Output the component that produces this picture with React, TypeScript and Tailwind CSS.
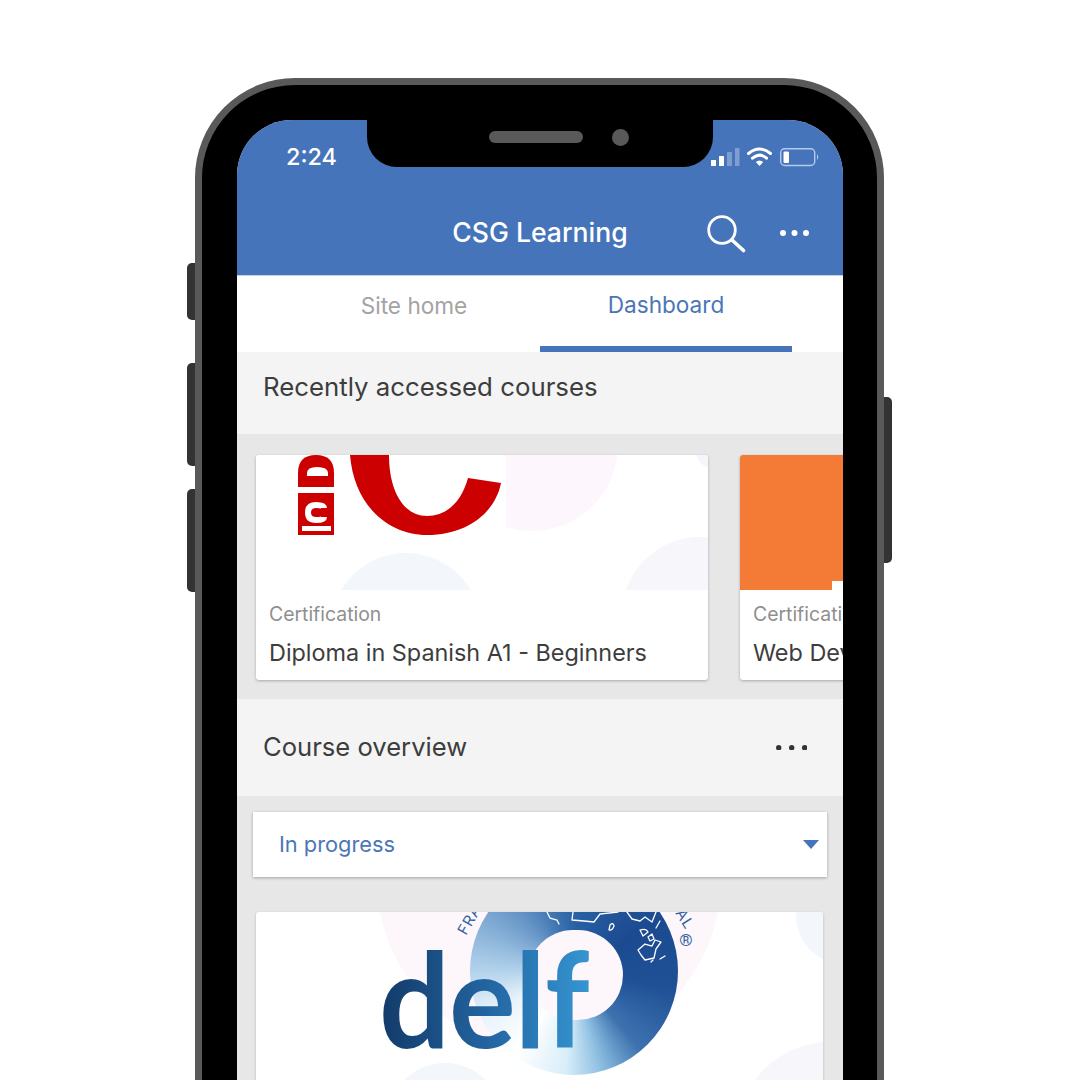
import React from "react";

const BLUE = "#4674bb";

function Dots({ color, r = 3, gap = 11.5 }: { color: string; r?: number; gap?: number }) {
  const w = gap * 2 + r * 2;
  return (
    <svg width={w} height={r * 2} viewBox={`0 0 ${w} ${r * 2}`} className="block">
      <circle cx={r} cy={r} r={r} fill={color} />
      <circle cx={r + gap} cy={r} r={r} fill={color} />
      <circle cx={r + gap * 2} cy={r} r={r} fill={color} />
    </svg>
  );
}

function StatusIcons() {
  return (
    <svg width="110" height="20" viewBox="710 147 110 20" className="block">
      <rect x="711" y="160" width="5" height="6" rx="0.5" fill="#fff" />
      <rect x="719" y="156" width="5" height="10" rx="0.5" fill="#fff" />
      <rect x="727" y="152" width="5" height="14" rx="0.5" fill="#fff" fillOpacity="0.3" />
      <rect x="735" y="148" width="4.5" height="18" rx="0.5" fill="#fff" fillOpacity="0.3" />
      <g fill="none" stroke="#fff" strokeWidth="3" strokeLinecap="round">
        <path d="M748.5 153.5 Q759.5 144.5 770.5 153.5" />
        <path d="M752.5 158.2 Q759.5 152 766.5 158.2" />
      </g>
      <path d="M755.8 162 Q759.5 158.8 763.2 162 L759.5 166 Z" fill="#fff" />
      <rect x="780.7" y="148.7" width="34" height="16.8" rx="4" fill="none" stroke="#b4cbea" strokeWidth="1.4" />
      <rect x="783.5" y="151.5" width="5.5" height="11.5" rx="1.2" fill="#fff" />
      <path d="M817 154 Q819.5 157 817 160 Z" fill="#b4cbea" />
    </svg>
  );
}

function SearchIcon() {
  return (
    <svg width="40" height="40" viewBox="706 214 40 40" className="block" fill="none" stroke="#fff">
      <circle cx="722" cy="231" r="13.3" strokeWidth="2.8" />
      <path d="M732 241 L743.5 251.5" strokeWidth="3.6" strokeLinecap="round" />
    </svg>
  );
}

function SpanishArt() {
  return (
    <svg width="452" height="135" viewBox="256 455 452 135" className="block">
      <rect x="256" y="455" width="452" height="135" fill="#fff" />
      <clipPath id="pinkclip">
        <rect x="506" y="455" width="120" height="90" />
      </clipPath>
      <circle cx="532" cy="445" r="86" fill="#fdf6fc" clipPath="url(#pinkclip)" />
      <circle cx="406" cy="628" r="75" fill="#f3f6fb" />
      <circle cx="700" cy="615" r="78" fill="#f6f6fb" />
      <circle cx="712" cy="452" r="16" fill="#f5f6fb" />
      <path
        d="M350 455 C354 505 388 535 427 535 C467 535 495 513 501 483 L468 478 C461 503 446 516 427 516 C403 516 389 490 389 455 Z"
        fill="#cc0000"
      />
      <path d="M298 487 L298 473 Q298 455 316 455 Q334 455 334 473 L334 487 Z" fill="#cc0000" />
      <path d="M307 476 L307 473 Q307 467 317 467 Q328 467 328 473 L328 476 Z" fill="#fff" />
      <rect x="298" y="493" width="36" height="42" fill="#cc0000" />
      <path d="M324 517 Q324 520 316 520 Q308 520 308 512.5 Q308 505 316 505 Q324 505 324 508" fill="none" stroke="#fff" strokeWidth="6" />
      <rect x="302" y="526" width="29" height="5" fill="#fff" />
    </svg>
  );
}

function CourseCard({ children, sub, title }: { children: React.ReactNode; sub: string; title: string }) {
  return (
    <div className="w-[452px] h-[225px] shrink-0 bg-white rounded-[3px] overflow-hidden shadow-[0_1px_3px_rgba(0,0,0,0.28)]">
      <div className="h-[135px]">{children}</div>
      <div className="pl-[13px] whitespace-nowrap">
        <div className="text-[19.4px] leading-[24px] mt-[12px] text-[#8f8f8f]">{sub}</div>
        <div className="text-[23.4px] leading-[30px] mt-[12px] text-[#3d3d3d]">{title}</div>
      </div>
    </div>
  );
}

function DelfCard() {
  return (
    <div className="relative ml-[3px] mt-[35px] w-[567px] h-[300px] bg-white rounded-t-[3px] overflow-hidden shadow-[0_1px_3px_rgba(0,0,0,0.2)]">
      <svg width="567" height="168" viewBox="256 912 567 168" className="block">
        <circle cx="549" cy="880" r="172" fill="#fdf6fb" />
        <circle cx="846" cy="915" r="50" fill="#f3f6fb" />
        <circle cx="445" cy="1120" r="57" fill="#f3f7fb" />
        <circle cx="830" cy="1135" r="93" fill="#f6f6fb" />
      </svg>
      <div className="absolute left-[214px] top-[-45px] w-[208px] h-[208px] rounded-full bg-[conic-gradient(#2a62a6_0deg,#1b4a90_60deg,#1f5096_100deg,#3d72af_140deg,#8fc0e2_165deg,#d9eef9_185deg,#ffffff_215deg,#e6f3fb_245deg,#a9cce8_275deg,#6f9ccb_310deg,#3f74b0_340deg,#2a62a6_360deg)]" />
      <div className="absolute left-[272px] top-[18px] w-[95px] h-[90px] rounded-full bg-[#fdf6fb]" />
      <svg width="567" height="168" viewBox="256 912 567 168" className="absolute left-0 top-0">
        <g fill="none" stroke="#fff" strokeWidth="1.3" strokeLinejoin="round" strokeLinecap="round">
          <path d="M547 912 L550 918 L557 920 L559 924" />
          <path d="M573 912 L572 920 L584 921 L594 922 L600 914 L618 912" />
          <path d="M610 925 Q613 922 614 926 Q612 931 609 930 Z" />
          <path d="M627 912 L632 919 L640 921 L645 917 L652 922 L656 912" />
          <path d="M660 921 L656 928" />
          <path d="M640 930 Q646 928 648 932 L643 936 Z" />
          <path d="M648 937 L652 934 L654 939 L650 941 Z" />
          <path d="M638 950 L645 944 L652 946 L655 940 L661 942 L656 949 L654 958 L645 960 L641 955 Z" />
          <path d="M651 962 L653 960" />
          <path d="M660 959 L665 956" />
        </g>
        <text x="0" y="0" transform="translate(466 936) rotate(-60)" fontFamily="Inter, sans-serif" fontSize="15" fill="#33629c" letterSpacing="1">FRA</text>
        <text x="0" y="0" transform="translate(675 913) rotate(58)" fontFamily="Inter, sans-serif" fontSize="15" fill="#33629c" letterSpacing="1">AL</text>
        <text x="686" y="946" textAnchor="middle" fontFamily="Roboto, sans-serif" fontSize="17" fill="#33629c">®</text>
      </svg>
      <div className="absolute left-[123px] top-[18px] text-[133px] leading-[133px] font-bold tracking-[-1px] font-['Lato',sans-serif] origin-left scale-x-[0.94] bg-gradient-to-r from-[#123a68] via-[#22639f] to-[#3596d2] bg-clip-text text-transparent">
        delf
      </div>
    </div>
  );
}

export default function App() {
  return (
    <div className="w-[1080px] h-[1080px] overflow-hidden bg-white pl-[195px] pt-[78px] font-['Inter',sans-serif]">
      <div className="relative w-[689px] h-[1100px] border-[7px] border-[#595959] rounded-t-[100px] rounded-b-[100px] bg-black pl-[35px] pt-[35px]">
        <div className="absolute left-[-15px] top-[178px] w-[8px] h-[57px] bg-[#333333] rounded-l-[5px]" />
        <div className="absolute left-[-15px] top-[278px] w-[8px] h-[103px] bg-[#333333] rounded-l-[5px]" />
        <div className="absolute left-[-15px] top-[404px] w-[8px] h-[103px] bg-[#333333] rounded-l-[5px]" />
        <div className="absolute right-[-15px] top-[312px] w-[8px] h-[166px] bg-[#333333] rounded-r-[5px]" />

        <div className="relative w-[606px] h-[1060px] rounded-t-[55px] overflow-hidden bg-[#e7e7e7]">
          <div className="absolute left-[130px] top-0 w-[346px] h-[47px] bg-black rounded-b-[30px] flex items-start pl-[122px] pt-[11px]">
            <div className="w-[94px] h-[12px] rounded-full bg-[#595959]" />
            <div className="w-[17px] h-[17px] rounded-full bg-[#595959] ml-[29px] mt-[-2px]" />
          </div>

          <header className="h-[155px] flex flex-col text-white" style={{ backgroundColor: BLUE }}>
            <div className="h-[74px] flex items-center justify-between pl-[49px] pr-[23px]">
              <span className="text-[23.4px] font-medium">2:24</span>
              <StatusIcons />
            </div>
            <div className="h-[81px] pb-[3px] grid grid-cols-[1fr_auto_1fr] items-center">
              <div />
              <div className="text-[26.6px] font-medium">CSG Learning</div>
              <div className="flex items-center justify-end gap-[34px] pr-[34px]">
                <SearchIcon />
                <Dots color="#fff" />
              </div>
            </div>
          </header>

          <nav className="h-[77px] bg-white flex px-[51px] border-t border-[#bfd4ec]">
            <div className="w-[252px] flex items-center justify-center border-b-[6px] border-transparent pb-[10px] text-[22.6px] text-[#a3a3a3]">
              Site home
            </div>
            <div className="w-[252px] flex items-center justify-center border-b-[6px] border-[#4674bb] pb-[12px] text-[22.6px] text-[#4a76b8]">
              Dashboard
            </div>
          </nav>

          <div className="h-[82px] bg-[#f4f4f4] flex items-center pb-[12px] px-[26px] text-[25.8px] text-[#3d3d3d]">
            Recently accessed courses
          </div>

          <div className="h-[265px] bg-[#e7e7e7] pt-[21px] pl-[19px] flex gap-[32px] overflow-hidden">
            <CourseCard sub="Certification" title="Diploma in Spanish A1 - Beginners">
              <SpanishArt />
            </CourseCard>
            <CourseCard sub="Certification" title="Web Development">
              <div className="relative h-full bg-[#f47b36]">
                <div className="absolute left-[92px] top-[126px] w-[20px] h-[9px] bg-white" />
              </div>
            </CourseCard>
          </div>

          <div className="h-[97px] bg-[#f4f4f4] flex items-center justify-between pl-[26px] pr-[36px] text-[25.6px] text-[#3d3d3d]">
            <span>Course overview</span>
            <Dots color="#333333" r={2.7} gap={13} />
          </div>

          <div className="bg-[#e7e7e7] pt-[16px] px-[16px]">
            <div className="h-[65px] bg-white flex items-center justify-between pl-[26px] pr-[8px] shadow-[0_1px_3px_rgba(0,0,0,0.3)]">
              <span className="text-[21.8px] text-[#4a76b8]">In progress</span>
              <svg width="16" height="9" viewBox="0 0 16 9" className="block">
                <path d="M0 0 H16 L8 9 Z" fill={BLUE} />
              </svg>
            </div>
            <DelfCard />
          </div>
        </div>
      </div>
    </div>
  );
}
